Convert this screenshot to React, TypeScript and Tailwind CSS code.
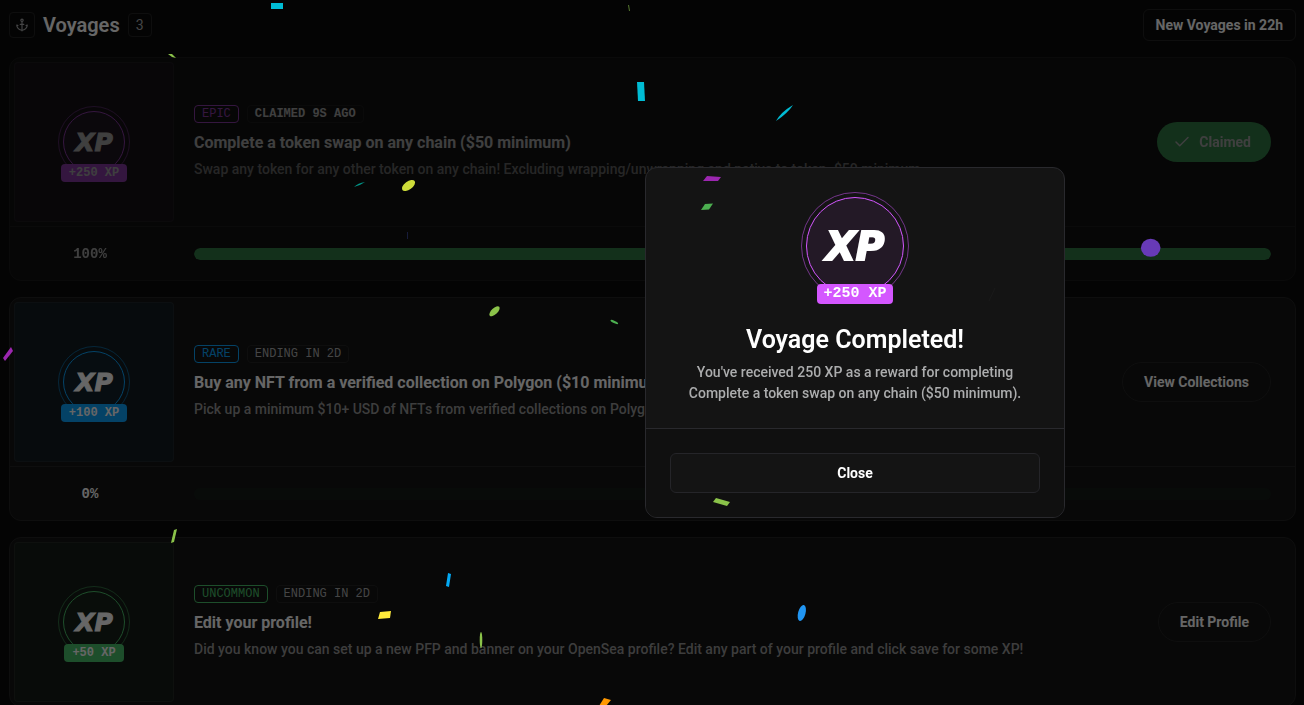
import { Anchor, Check } from "lucide-react";

type Tone = "epic" | "rare" | "uncommon";

interface Voyage {
  tone: Tone;
  xp: number;
  rarity: string;
  status: string;
  title: string;
  description: string;
  action: string;
  progress?: number;
  claimed?: boolean;
}

const voyages: Voyage[] = [
  {
    tone: "epic",
    xp: 250,
    rarity: "EPIC",
    status: "CLAIMED 9S AGO",
    title: "Complete a token swap on any chain ($50 minimum)",
    description:
      "Swap any token for any other token on any chain! Excluding wrapping/unwrapping and native to token. $50 minimum.",
    action: "Claimed",
    progress: 100,
    claimed: true,
  },
  {
    tone: "rare",
    xp: 100,
    rarity: "RARE",
    status: "ENDING IN 2D",
    title: "Buy any NFT from a verified collection on Polygon ($10 minimum)",
    description: "Pick up a minimum $10+ USD of NFTs from verified collections on Polygon.",
    action: "View Collections",
    progress: 0,
  },
  {
    tone: "uncommon",
    xp: 50,
    rarity: "UNCOMMON",
    status: "ENDING IN 2D",
    title: "Edit your profile!",
    description:
      "Did you know you can set up a new PFP and banner on your OpenSea profile? Edit any part of your profile and click save for some XP!",
    action: "Edit Profile",
  },
];

const tones = {
  epic: {
    tag: "border-[#d457ff] text-[#d457ff]",
    thumb: "bg-[#d457ff]/5",
    ring: "border-[#d457ff]/50",
    disc: "border-[#d457ff] bg-[#d457ff]/8",
    badge: "bg-[#d457ff]",
  },
  rare: {
    tag: "border-[#0aa5ff] text-[#0aa5ff]",
    thumb: "bg-[#0aa5ff]/6",
    ring: "border-[#0aa5ff]/50",
    disc: "border-[#0aa5ff] bg-[#0aa5ff]/5",
    badge: "bg-[#0aa5ff]",
  },
  uncommon: {
    tag: "border-[#4ac26b] text-[#4ac26b]",
    thumb: "bg-[#4ac26b]/5",
    ring: "border-[#4ac26b]/50",
    disc: "border-[#4ac26b] bg-[#4ac26b]/4",
    badge: "bg-[#4ac26b]",
  },
};

const mono = "font-['Liberation_Mono',monospace]";

function XpMedal({ tone, xp, large = false }: { tone: Tone; xp: number; large?: boolean }) {
  const t = tones[tone];
  return (
    <div className={`flex flex-col items-center ${large ? "h-28" : "h-18"}`}>
      <div className={`shrink-0 rounded-full border p-1 ${t.ring} ${large ? "size-27" : "size-18"}`}>
        <div className={`flex size-full items-center justify-center rounded-full border ${t.disc}`}>
          <span
            className={`font-['DejaVu_Sans',sans-serif] leading-none font-bold text-white italic ${
              large ? "text-[39px] [-webkit-text-stroke:2px_white]" : "text-[25px] [-webkit-text-stroke:1px_white]"
            }`}
          >
            XP
          </span>
        </div>
      </div>
      <div
        className={`relative shrink-0 rounded font-bold whitespace-nowrap text-white ${mono} ${t.badge} ${
          large ? "-mt-4 px-1.5 text-[15px] leading-5" : "-mt-3.5 px-2 text-xs leading-[18px]"
        }`}
      >
        +{xp} XP
      </div>
    </div>
  );
}

function VoyageCard({ v }: { v: Voyage }) {
  const t = tones[v.tone];
  return (
    <article
      className={`rounded-xl border border-[#242424] bg-[#141414] ${v.claimed ? "opacity-60" : ""}`}
    >
      <div className="flex items-center gap-5 p-1 pr-6">
        <div className={`flex size-40 shrink-0 items-center justify-center rounded border border-white/5 ${t.thumb}`}>
          <XpMedal tone={v.tone} xp={v.xp} />
        </div>
        <div className="min-w-0 flex-1">
          <div className={`mb-2 flex gap-2 text-xs leading-4 ${mono}`}>
            <span className={`rounded border px-[7px] ${t.tag}`}>{v.rarity}</span>
            <span className={`rounded border border-[#242424] px-[7px] ${v.claimed ? "font-bold text-white" : "text-[#acadae]"}`}>
              {v.status}
            </span>
          </div>
          <h2 className="truncate text-base leading-6 font-bold text-white">{v.title}</h2>
          <p className="mt-1 truncate text-sm leading-5 font-medium text-[#999]">{v.description}</p>
        </div>
        {v.claimed ? (
          <button disabled className="flex h-10 items-center gap-2 rounded-full bg-[#4ac26b] px-4 pr-5 text-sm font-bold text-white">
            <Check className="size-[18px]" strokeWidth={2} />
            {v.action}
          </button>
        ) : (
          <button className="h-10 rounded-full border border-[#242424] px-[21px] text-sm font-bold text-white">
            {v.action}
          </button>
        )}
      </div>
      {v.progress !== undefined && (
        <div className="flex h-[54px] items-center gap-6 border-t border-[#242424] pr-6">
          <div className={`w-40 shrink-0 text-center text-sm font-bold text-white ${mono}`}>{v.progress}%</div>
          <div className="h-3 flex-1 overflow-hidden rounded-full bg-[#4ac26b]/6">
            <div className="h-full rounded-full bg-[#4ac26b]" style={{ width: `${v.progress}%` }} />
          </div>
        </div>
      )}
    </article>
  );
}

function Confetti() {
  return (
    <svg className="pointer-events-none fixed top-0 left-0" width="1304" height="705" aria-hidden="true">
      <path d="M271 3h12v6h-12z" fill="#00bcd4" />
      <path d="M628 5l1 0 1 6-1 0z" fill="#8bc34a" opacity=".6" />
      <path d="M168 54l4 0 4 4-4-1z" fill="#8bc34a" />
      <path d="M637 82l7 0 1 19-7 0z" fill="#00bcd4" />
      <path d="M776 121Q781 112 793 105Q788 113 776 121z" fill="#00bcd4" />
      <path d="M354 187Q358 183 365 182Q361 185 354 187z" fill="#009688" />
      <ellipse cx="408.500" cy="185.500" rx="7.600" ry="4" transform="rotate(-36 408.500 185.500)" fill="#cddc39" />
      <path d="M407 232h1v7h-1z" fill="#3f51b5" opacity=".3" />
      <path d="M707 176l14 1-3 4-15 0z" fill="#9c27b0" />
      <path d="M705 204l8-.5-4 6-8 .5z" fill="#4caf50" />
      <ellipse cx="1150.700" cy="247.800" rx="9.800" ry="9" fill="#673ab7" />
      <path d="M995 288l-6 13" stroke="#1a1a1a" />
      <ellipse cx="494.500" cy="311.300" rx="6.500" ry="3" transform="rotate(-43 494.500 311.300)" fill="#8bc34a" />
      <ellipse cx="614.300" cy="322" rx="4.200" ry="1.200" transform="rotate(25 614.300 322)" fill="#4caf50" />
      <path d="M11 347l2 4-8 10-2-3z" fill="#9c27b0" />
      <path d="M716 498l14 4-3 4-14-4z" fill="#8bc34a" />
      <path d="M174 530l3-1-3 13-3 1z" fill="#8bc34a" />
      <path d="M448 573l3 1-2 13-3-1z" fill="#03a9f4" />
      <path d="M380 612l11-1-1 7-12 1z" fill="#ffeb3b" />
      <ellipse cx="481" cy="640" rx="1.300" ry="8" fill="#8bc34a" />
      <ellipse cx="801.800" cy="613" rx="3.700" ry="8.200" transform="rotate(15 801.800 613)" fill="#2196f3" />
      <path d="M604 698l7 2-5 6-7 0z" fill="#ff9800" />
    </svg>
  );
}

export default function App() {
  return (
    <div className="h-screen overflow-hidden bg-[#0b0b0b] font-['Roboto',sans-serif]">
      <main className="flex flex-col gap-4 py-[9px] pr-2 pl-[9px]">
        <header className="flex h-8 items-center justify-between">
          <div className="flex items-center gap-2">
            <span className="flex size-[26px] items-center justify-center rounded border border-[#242424] text-[#acadae]">
              <Anchor className="size-3.5" />
            </span>
            <h1 className="text-xl font-semibold text-white">Voyages</h1>
            <span className="flex size-6 items-center justify-center rounded border border-[#242424] text-sm text-[#acadae]">
              3
            </span>
          </div>
          <button className="h-8 rounded-md border border-[#242424] px-3 text-sm font-bold text-white">
            New Voyages in 22h
          </button>
        </header>
        {voyages.map((v) => (
          <VoyageCard key={v.title} v={v} />
        ))}
      </main>

      <div className="fixed inset-0 flex items-center justify-end bg-black/60 pr-[239px] pb-5">
        <section
          role="dialog"
          aria-modal="true"
          aria-labelledby="dialog-title"
          className="w-[420px] overflow-hidden rounded-xl border border-[#29292d] bg-[#141414]"
        >
          <div className="flex flex-col items-center p-6 text-center">
            <XpMedal tone="epic" xp={250} large />
            <h2 id="dialog-title" className="mt-5 text-[25px] leading-8 font-semibold text-white">
              Voyage Completed!
            </h2>
            <p className="mt-1.5 text-sm leading-[21px] font-medium text-[#acadae]">
              You've received 250 XP as a reward for completing
              <br />
              Complete a token swap on any chain ($50 minimum).
            </p>
          </div>
          <div className="border-t border-[#29292d] bg-[#101010] p-6">
            <button className="h-10 w-full rounded-md border border-[#252529] bg-[#141414] text-sm font-bold text-white">
              Close
            </button>
          </div>
        </section>
      </div>
      <Confetti />
    </div>
  );
}
